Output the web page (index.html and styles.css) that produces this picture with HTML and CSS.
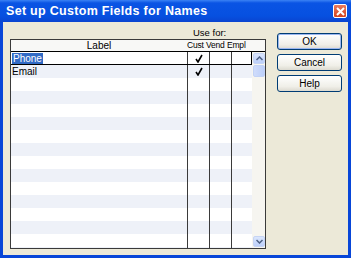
FILE: index.html
```html
<!DOCTYPE html>
<html lang="en">
<head>
  <meta charset="UTF-8">
  <title>Set up Custom Fields for Names</title>
  <link rel="stylesheet" href="styles.css">
</head>
<body>
  <div class="window">
    <div class="titlebar">
      <span class="title">Set up Custom Fields for Names</span>
      <span class="close">
        <svg width="9" height="9" viewBox="0 0 9 9"><path d="M1 1L8 8M8 1L1 8" stroke="#fff" stroke-width="2"/></svg>
      </span>
    </div>

    <div class="frame">
      <div class="fields">
        <div class="use-for">Use for:</div>
        <div class="grid">
          <div class="grid-head">
            <span class="h-label">Label</span>
            <span class="h-cust">Cust</span>
            <span class="h-vend">Vend</span>
            <span class="h-empl">Empl</span>
          </div>
          <div class="grid-body">
            <div class="rows" id="rows"></div>
            <div class="scrollbar">
              <div class="sb-btn">
                <svg width="7" height="5" viewBox="0 0 7 5"><path d="M0.5 4L3.5 1L6.5 4" fill="none" stroke="#4d6185" stroke-width="1.5"/></svg>
              </div>
              <div class="sb-thumb"></div>
              <div class="sb-track"></div>
              <div class="sb-btn">
                <svg width="7" height="5" viewBox="0 0 7 5"><path d="M0.5 1L3.5 4L6.5 1" fill="none" stroke="#4d6185" stroke-width="1.5"/></svg>
              </div>
            </div>
          </div>
        </div>
      </div>

      <div class="buttons">
        <button class="btn default">OK</button>
        <button class="btn">Cancel</button>
        <button class="btn">Help</button>
      </div>
    </div>
  </div>

  <script>
    const fields = [
      { label: 'Phone', cust: true },
      { label: 'Email', cust: true }
    ];
    const check = '<svg width="8" height="9" viewBox="0 0 8 9"><path d="M1 5L3 8L7 1" fill="none" stroke="#000" stroke-width="1.6"/></svg>';

    const rows = document.getElementById('rows');
    for (let i = 0; i < 16; i++) {
      const f = fields[i] || { label: '' };
      const row = document.createElement('div');
      row.className = 'row' + (i % 2 ? ' alt' : '') + (i === 0 ? ' current' : '');
      const label = i === 0 ? '<span class="selected">' + f.label + '</span>' : f.label;
      row.innerHTML =
        '<span class="c-label">' + label + '</span>' +
        '<span class="c-check">' + (f.cust ? check : '') + '</span>' +
        '<span class="c-check"></span>' +
        '<span class="c-check last"></span>';
      rows.appendChild(row);
    }
  </script>
</body>
</html>
```

FILE: styles.css
```css
* {
  box-sizing: border-box;
}

body {
  margin: 0;
  font-family: 'Liberation Sans', Arial, sans-serif;
  font-size: 10px;
  color: #000;
}

.window {
  width: 351px;
  height: 258px;
  display: flex;
  flex-direction: column;
}

.titlebar {
  height: 22px;
  display: flex;
  align-items: center;
  justify-content: space-between;
  padding: 0 4px 0 6px;
  background: linear-gradient(#3b82f4 0, #0a54e4 3px, #0650e0 16px, #0a44d0 22px);
}

.title {
  color: #fff;
  font-weight: bold;
  font-size: 12.5px;
  letter-spacing: 0.3px;
}

.close {
  width: 14px;
  height: 14px;
  display: flex;
  align-items: center;
  justify-content: center;
  background: linear-gradient(#ea7a5c, #d3431f);
  border: 1px solid #fff;
  border-radius: 2px;
}

.frame {
  flex: 1;
  display: flex;
  background: #ece9d8;
  border: 3px solid #0846d8;
  border-top: 0;
  padding: 0 0 0 7px;
}

.fields {
  width: 256px;
}

.use-for {
  height: 17px;
  line-height: 17px;
  padding-left: 183px;
  padding-top: 2px;
  font-size: 9.5px;
}

.grid {
  height: 210px;
  border: 1px solid #3a3a3a;
  background: #fff;
  display: flex;
  flex-direction: column;
}

.grid-head {
  height: 12px;
  line-height: 11px;
  display: flex;
  border-bottom: 1px solid #000;
  background: #f8f8f6;
  font-size: 8.5px;
}

.h-label {
  width: 176px;
  text-align: center;
  font-size: 10px;
}

.h-cust,
.h-vend,
.h-empl {
  letter-spacing: -0.2px;
  white-space: nowrap;
}

.h-cust {
  width: 19px;
}

.h-vend {
  width: 21px;
}

.h-empl {
  width: 20px;
}

.grid-body {
  flex: 1;
  display: flex;
  overflow: hidden;
}

.rows {
  width: 241px;
  overflow: hidden;
}

.row {
  height: 13px;
  display: flex;
  background: #fff;
}

.row.alt {
  background: #eef1f8;
}

.row.current {
  border-bottom: 1px solid #000;
}

.c-label {
  width: 176px;
  padding: 1px 0 0 1px;
  line-height: 11px;
}

.selected {
  display: inline-block;
  background: #316ac5;
  color: #fff;
  padding: 0 1px;
}

.c-check {
  width: 22px;
  border-left: 1px solid #3a3a3a;
  display: flex;
  align-items: center;
  justify-content: center;
}

.c-check.last {
  width: 21px;
}

.row.current .c-check.last {
  border-right: 1px solid #000;
}

.scrollbar {
  width: 13px;
  display: flex;
  flex-direction: column;
  background: #f6f5f0;
  padding: 1px 0 1px 1px;
}

.sb-btn {
  height: 11px;
  display: flex;
  align-items: center;
  justify-content: center;
  background: linear-gradient(#dbe6fd, #bccffa);
  border: 1px solid #c6d4f4;
  border-radius: 2px;
}

.sb-thumb {
  height: 12px;
  margin-top: 1px;
  background: linear-gradient(90deg, #cfdcfb, #bdcff9);
  border: 1px solid #c2d2f6;
  border-radius: 2px;
}

.sb-track {
  flex: 1;
}

.buttons {
  margin-left: 11px;
  padding-top: 11px;
  display: flex;
  flex-direction: column;
  gap: 4px;
}

.btn {
  width: 65px;
  height: 17px;
  padding: 0;
  font-family: 'Liberation Sans', Arial, sans-serif;
  font-size: 10px;
  color: #000;
  background: linear-gradient(#ffffff, #f0efe8 70%, #dcdad0);
  border: 1px solid #003c74;
  border-radius: 3px;
}

.btn.default {
  box-shadow: inset 0 0 0 1px #9bb7f0;
}
```
